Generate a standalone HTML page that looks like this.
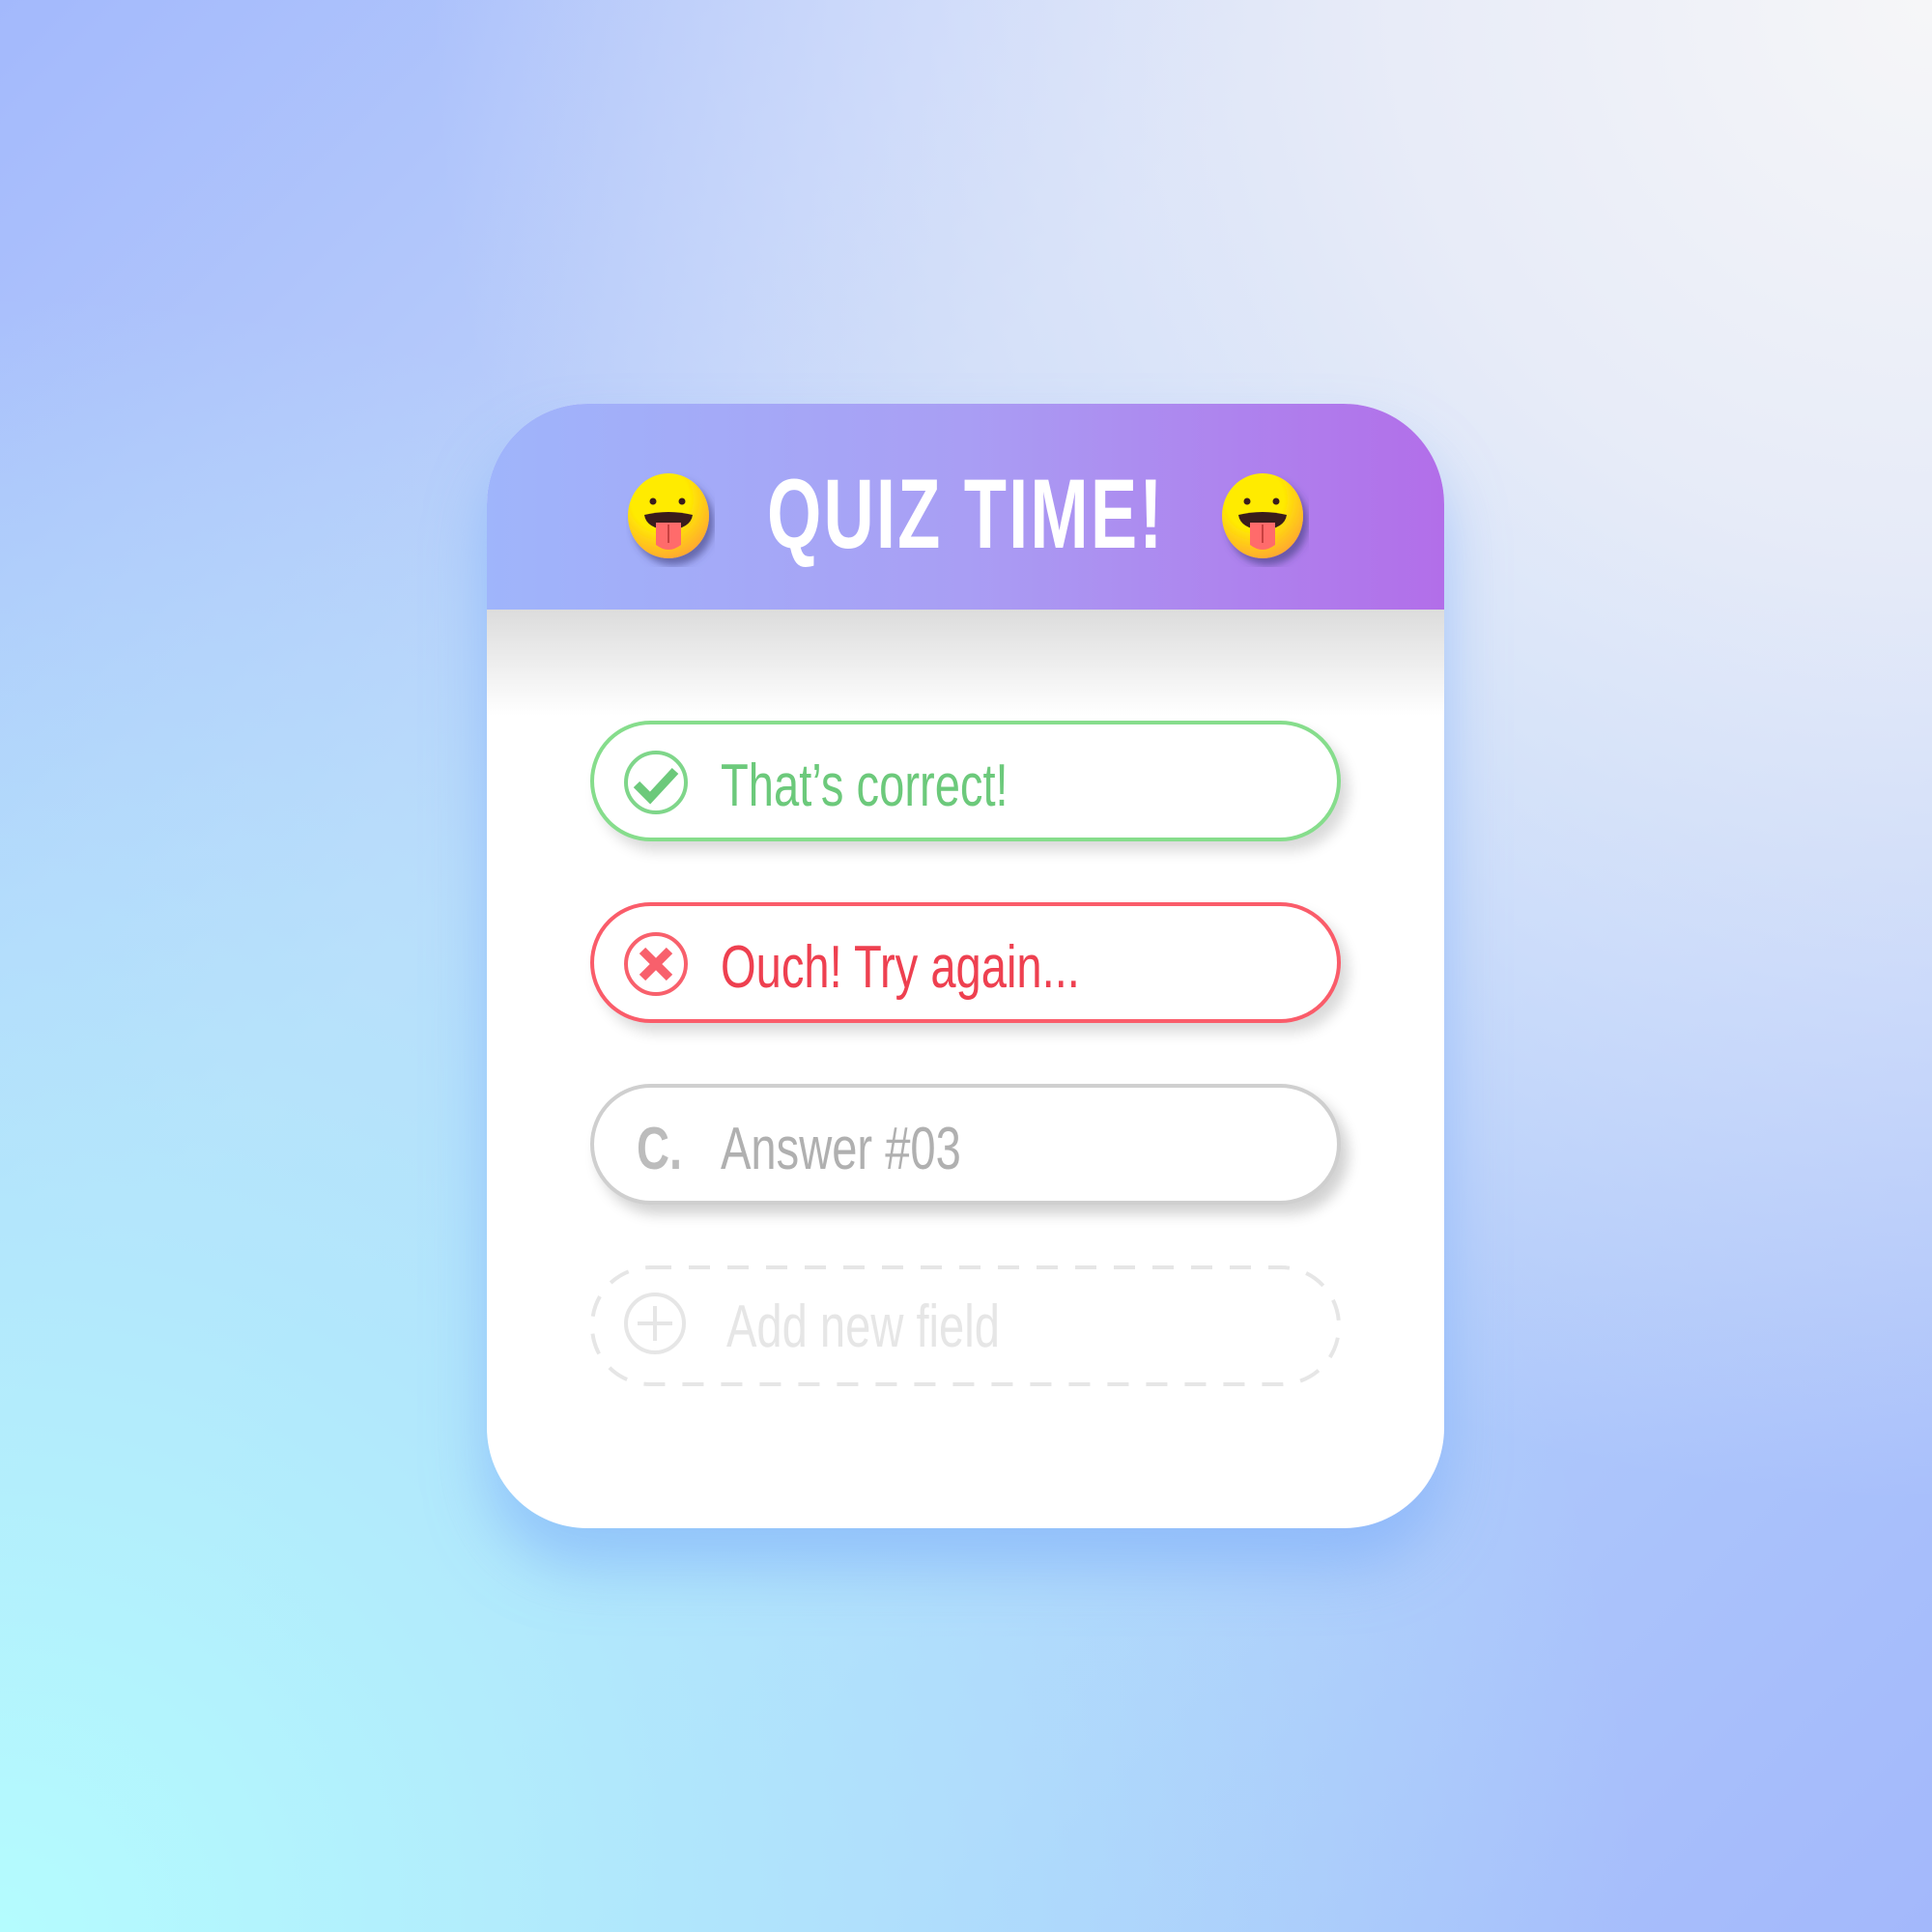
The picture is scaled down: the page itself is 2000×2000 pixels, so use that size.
<!DOCTYPE html>
<html><head><meta charset="utf-8"><style>
html,body{margin:0;padding:0}
body{width:2000px;height:2000px;position:relative;overflow:hidden;font-family:"Liberation Sans",sans-serif;
background:
radial-gradient(circle at 100% 0%, rgba(246,246,248,1) 0%, rgba(236,238,248,0.9) 20%, rgba(220,228,248,0) 55%),
radial-gradient(circle at 0% 100%, rgba(180,252,254,1) 0%, rgba(176,236,252,0.8) 25%, rgba(170,220,252,0) 60%),
linear-gradient(135deg,#a3b9fc 0%,#c0d4fa 35%,#b6d4fb 55%,#a3b8fb 100%);}
.card{position:absolute;left:504px;top:418px;width:991px;height:1164px;border-radius:104px;background:#fff;overflow:hidden;
box-shadow:0 40px 60px rgba(120,170,250,0.55);}
.hdr{position:absolute;left:0;top:0;width:100%;height:213px;background:linear-gradient(90deg,#9fb5fb,#a99ef4 50%,#b26ee9);}
.shade{position:absolute;left:0;top:213px;width:100%;height:110px;background:linear-gradient(#dcdcdc,#fff);}
.title{position:absolute;left:290px;top:56px;color:#fff;font-size:102px;font-weight:bold;white-space:nowrap;transform:scaleX(0.71);transform-origin:left top;letter-spacing:3px}
.emo{position:absolute;top:70px;width:92px;height:100px}
.pill{position:absolute;left:107px;width:777px;height:125px;box-sizing:border-box;border-radius:64px;background:#fff}
.txt{position:absolute;left:131px;top:28px;font-size:62px;white-space:nowrap;transform:scaleX(0.76);transform-origin:left top}
</style></head><body>
<div class="card">
<div class="hdr"></div><div class="shade"></div>
<svg class="emo" style="left:144px" viewBox="0 0 92 100"><defs><radialGradient id="g" cx="0.4" cy="0.3" r="0.8"><stop offset="0.45" stop-color="#ffeb00"/><stop offset="1" stop-color="#ff9a3c"/></radialGradient><filter id="s"><feDropShadow dx="5" dy="7" stdDeviation="4" flood-color="#3a3a7a" flood-opacity="0.6"/></filter></defs>
<ellipse cx="44" cy="46" rx="42" ry="44" fill="url(#g)" filter="url(#s)"/><circle cx="28" cy="31" r="3.5" fill="#3a1c1c"/><circle cx="58" cy="31" r="3.5" fill="#3a1c1c"/><path d="M19 45 Q44 39 69 45 Q67 59 44 61 Q21 59 19 45Z" fill="#3a1c1c"/><path d="M31 53 L57 53 L57 76 Q44 86 31 76Z" fill="#ff6b6b"/><line x1="44" y1="55" x2="44" y2="74" stroke="#c84040" stroke-width="2"/></svg>
<svg class="emo" style="left:759px" viewBox="0 0 92 100"><ellipse cx="44" cy="46" rx="42" ry="44" fill="url(#g)" filter="url(#s)"/><circle cx="28" cy="31" r="3.5" fill="#3a1c1c"/><circle cx="58" cy="31" r="3.5" fill="#3a1c1c"/><path d="M19 45 Q44 39 69 45 Q67 59 44 61 Q21 59 19 45Z" fill="#3a1c1c"/><path d="M31 53 L57 53 L57 76 Q44 86 31 76Z" fill="#ff6b6b"/><line x1="44" y1="55" x2="44" y2="74" stroke="#c84040" stroke-width="2"/></svg>
<div class="title">QUIZ TIME!</div>

<div class="pill" style="top:328px;border:4px solid #86dd8c;box-shadow:8px 10px 14px rgba(0,0,0,0.15)">
<svg style="position:absolute;left:30px;top:26px" width="68" height="68" viewBox="0 0 68 68"><circle cx="34" cy="34" r="31" fill="none" stroke="#7fd68a" stroke-width="4"/><path d="M14 36 L28 50 L54 22" fill="none" stroke="#6cc97b" stroke-width="9"/></svg>
<div class="txt" style="color:#6cc97b">That’s correct!</div></div>

<div class="pill" style="top:516px;border:4px solid #fa5c6a;box-shadow:8px 10px 14px rgba(0,0,0,0.15)">
<svg style="position:absolute;left:30px;top:26px" width="68" height="68" viewBox="0 0 68 68"><circle cx="34" cy="34" r="31" fill="none" stroke="#f8606c" stroke-width="4"/><path d="M20 20 L48 48 M48 20 L20 48" stroke="#f8606c" stroke-width="9"/></svg>
<div class="txt" style="color:#ee4050">Ouch! Try again...</div></div>

<div class="pill" style="top:704px;border:4px solid #cfcfcf;box-shadow:8px 10px 14px rgba(0,0,0,0.18)">
<div class="txt" style="left:44px;color:#bcbcbc;font-weight:bold">C.</div>
<div class="txt" style="color:#b0b0b0">Answer #03</div></div>

<svg style="position:absolute;left:107px;top:892px" width="777" height="125" viewBox="0 0 777 125"><rect x="2" y="2" width="773" height="121" rx="60" fill="none" stroke="#e6e6e6" stroke-width="4" stroke-dasharray="22 18"/></svg>
<div class="pill" style="top:892px;background:transparent">
<svg style="position:absolute;left:33px;top:26px" width="68" height="68" viewBox="0 0 68 68"><circle cx="34" cy="34" r="30" fill="none" stroke="#e6e6e6" stroke-width="4"/><path d="M34 16 V52 M16 34 H52" stroke="#e6e6e6" stroke-width="4"/></svg>
<div class="txt" style="left:141px;color:#e6e6e6">Add new field</div></div>
</div>
</body></html>
